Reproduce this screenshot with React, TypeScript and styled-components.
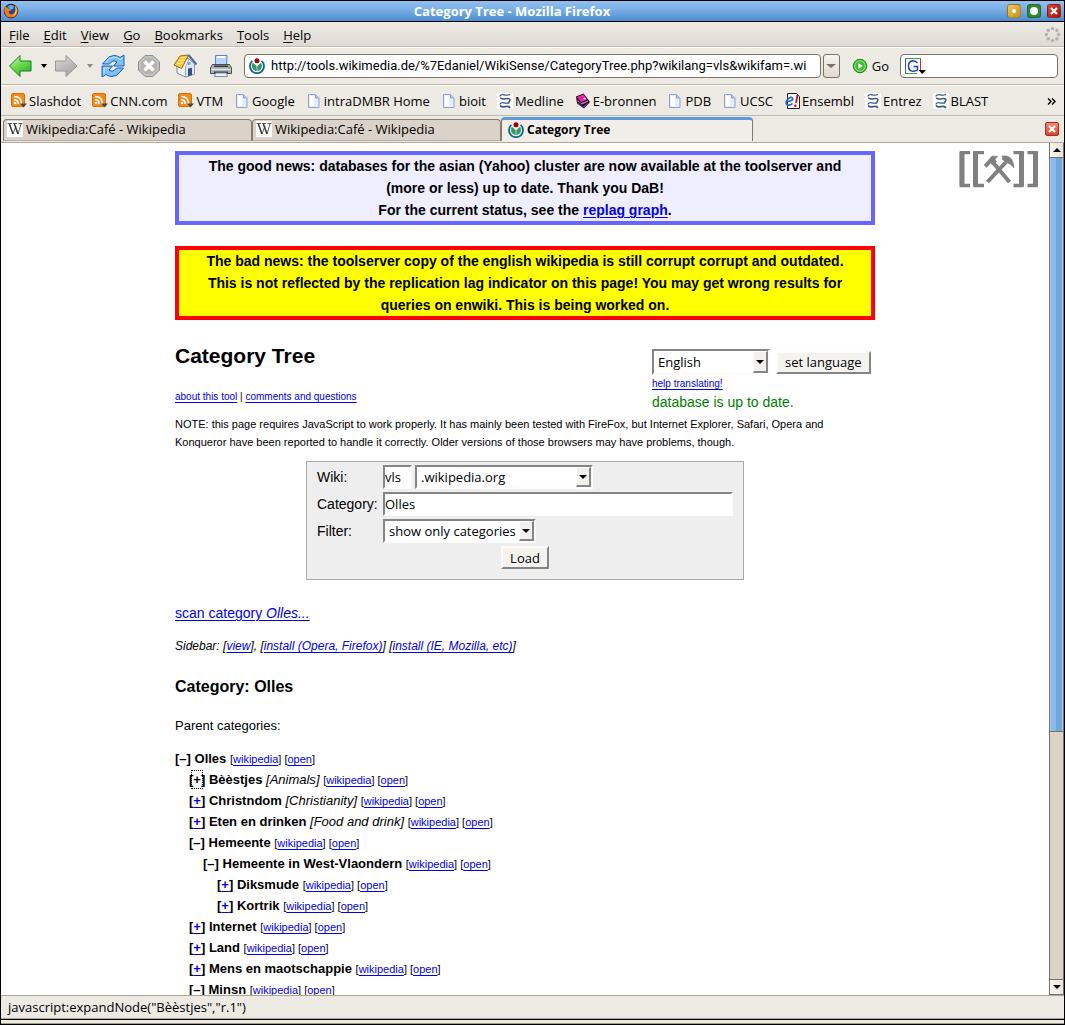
import React from 'react';
import styled, { createGlobalStyle, css } from 'styled-components';

const uiFont = '"Open Sans", "Noto Sans", sans-serif';
const pageFont = '"Liberation Sans", Arial, sans-serif';

const GlobalStyle = createGlobalStyle`
  * { box-sizing: border-box; }
  html, body { margin: 0; padding: 0; }
  body { background: #000; color: #000; }
`;

/* ---------- window frame ---------- */

const Window = styled.div`
  display: flex;
  flex-direction: column;
  height: 100vh;
  padding: 1px;
  background: #000;
  font: 13px/18px ${uiFont};
  overflow: hidden;
`;

const TitleBar = styled.header`
  display: grid;
  grid-template-columns: 20px 1fr 60px;
  align-items: center;
  height: 21px;
  flex: none;
  padding: 0 3px 0 2px;
  border-bottom: 1px solid #000;
  background: linear-gradient(#92c0f0, #78aee6 45%, #4a8dd0);
`;

const WindowTitle = styled.div`
  text-align: center;
  color: #fff;
  font-weight: 700;
  font-size: 13px;
`;

const WindowButtons = styled.div`
  display: flex;
  justify-content: flex-end;
  gap: 6px;
`;

const WindowButton = styled.button<{ $tone: string }>`
  display: grid;
  place-items: center;
  width: 14px;
  height: 14px;
  padding: 0;
  border: 1px solid rgba(60, 30, 0, 0.35);
  border-radius: 3px;
  background: ${(p) => p.$tone};
`;

const MenuBar = styled.nav`
  display: flex;
  align-items: center;
  gap: 14px;
  height: 25px;
  flex: none;
  padding: 1px 3px 0 8px;
  background: linear-gradient(#edeae5, #dfdad3);
  border-bottom: 1px solid #c4b8a4;
`;

const MenuItem = styled.button`
  padding: 0;
  border: 0;
  background: none;
  font: 13px/18px ${uiFont};

  &::first-letter {
    text-decoration: underline;
    text-underline-offset: 2px;
  }
`;

const Spacer = styled.div`
  flex: 1;
`;

const Toolbar = styled.div`
  display: flex;
  align-items: center;
  height: 38px;
  flex: none;
  padding: 0 6px 0 7px;
  background: #edeae4;
  border-top: 1px solid #fff;
  border-bottom: 1px solid #c4b8a4;
`;

const ToolButton = styled.button<{ $gap?: number }>`
  display: flex;
  align-items: center;
  flex: none;
  padding: 0;
  border: 0;
  margin-right: ${(p) => p.$gap ?? 0}px;
  background: none;
  font: 13px/18px ${uiFont};
`;

const fieldFrame = css`
  height: 24px;
  border: 1px solid #7d7265;
  border-radius: 4px;
  background: #fff;
`;

const AddressField = styled.label`
  ${fieldFrame}
  display: flex;
  align-items: center;
  gap: 6px;
  flex: 1;
  min-width: 0;
  padding: 0 6px 0 4px;
`;

const SearchField = styled.label`
  ${fieldFrame}
  display: flex;
  align-items: center;
  width: 158px;
  flex: none;
  padding: 0 4px;
`;

const BareInput = styled.input`
  flex: 1;
  min-width: 0;
  padding: 0;
  border: 0;
  outline: 0;
  background: none;
  font: 13px/18px ${uiFont};
`;

const AddressInput = styled(BareInput)`
  font-family: Roboto, ${uiFont};
`;

const HistoryButton = styled.button`
  display: grid;
  place-items: center;
  width: 17px;
  height: 24px;
  flex: none;
  margin: 0 12px 0 2px;
  padding: 0;
  border: 1px solid #7d7265;
  border-radius: 3px;
  background: linear-gradient(#f7f5f2, #dfd9d1);
`;

const GoLabel = styled.span`
  margin: 0 11px 0 4px;
`;

const BookmarkBar = styled.nav`
  display: flex;
  align-items: center;
  justify-content: space-between;
  height: 31px;
  flex: none;
  padding: 0 8px 0 10px;
  background: #edeae4;
  border-top: 1px solid #fff;
  border-bottom: 1px solid #bcb8b2;
  white-space: nowrap;
`;

const BookmarkList = styled.div`
  display: flex;
  gap: 11px;
`;

const Bookmark = styled.a`
  display: flex;
  align-items: center;
  gap: 2px;
  color: #000;
  text-decoration: none;

  svg { flex: none; }
`;

const MoreButton = styled.button`
  padding: 0;
  border: 0;
  background: none;
`;

const TabStrip = styled.div`
  display: flex;
  align-items: flex-end;
  height: 27px;
  flex: none;
  padding: 0 5px 1px 2px;
  background: #edeae4;
  border-bottom: 1px solid #b5a898;
`;

const Tab = styled.button<{ $active?: boolean }>`
  display: flex;
  align-items: center;
  gap: 3px;
  flex: 0 1 ${(p) => (p.$active ? 252 : 249)}px;
  min-width: 0;
  height: ${(p) => (p.$active ? 24 : 22)}px;
  padding: 0 3px 2px ${(p) => (p.$active ? 6 : 3)}px;
  border: 1px solid #85796b;
  border-bottom: ${(p) => (p.$active ? '0' : '1px solid #b5ada0')};
  border-top: ${(p) => (p.$active ? '3px solid #5c9ad8' : '1px solid #85796b')};
  border-radius: 4px 4px 0 0;
  background: ${(p) => (p.$active ? '#f1eeea' : '#dbd3c9')};
  font: ${(p) => (p.$active ? 700 : 400)} ${(p) => (p.$active ? 12 : 13)}px/18px ${uiFont};
  white-space: nowrap;
`;

const CloseTab = styled.button`
  display: grid;
  place-items: center;
  align-self: center;
  width: 14px;
  height: 14px;
  padding: 0;
  border: 1px solid #b22a1c;
  border-radius: 2px;
  background: linear-gradient(#f08a74, #d8452e);
`;

const Viewport = styled.div`
  display: flex;
  flex: 1;
  min-height: 0;
  background: #fff;
`;

const StatusBar = styled.footer`
  height: 24px;
  flex: none;
  padding: 2px 7px;
  border-top: 1px solid #aca58f;
  border-bottom: 1px solid #aca58f;
  background: #edeae4;
`;

const FrameEdge = styled.div`
  height: 4px;
  flex: none;
  margin-top: 1px;
  border-bottom: 1px solid #a49a80;
  background: #edeae4;
`;

/* ---------- scroll bar ---------- */

const ScrollTrack = styled.div`
  display: flex;
  flex-direction: column;
  width: 15px;
  flex: none;
  border: 1px solid #80705f;
  border-top: 0;
  background: #dbd3c8;
`;

const ScrollArrow = styled.button`
  display: grid;
  place-items: center;
  height: 14px;
  flex: none;
  padding: 0;
  border: 0;
  background: linear-gradient(90deg, #f8f6f3, #e9e4de);
`;

const ScrollThumb = styled.div`
  flex: 575 0 0;
  border: 1px solid #80705f;
  border-width: 1px 0;
  background: linear-gradient(90deg, #a5cdf4 10%, #8bbbe9 10%, #8bbbe9 45%, #70a8dc 45%, #70a8dc 90%, #a5cdf4 90%);
`;

const ScrollRest = styled.div`
  flex: 248 0 0;
  border-bottom: 1px solid #80705f;
`;

/* ---------- page ---------- */

const Page = styled.main`
  display: grid;
  grid-template-columns: minmax(0, 1fr) minmax(0, 700px) minmax(0, 1fr);
  flex: 1;
  min-width: 0;
  padding-top: 8px;
  overflow: hidden;
  font-family: ${pageFont};
`;

const Column = styled.div`
  grid-column: 2;
`;

const LogoLink = styled.a`
  justify-self: end;
  margin-right: 10px;
`;

const Banner = styled.section<{ $edge: string; $fill: string }>`
  margin-bottom: 21px;
  padding: 0 14px;
  border: 4px solid ${(p) => p.$edge};
  background: ${(p) => p.$fill};
  font-size: 14px;
  font-weight: 700;
  line-height: 22px;
  text-align: center;
`;

const Link = styled.a`
  color: #00e;
  text-decoration: underline;
  text-underline-offset: 2px;
  text-decoration-thickness: 1px;
`;

const PageHead = styled.div`
  display: grid;
  grid-template-columns: 1fr 223px;
  padding: 1px 0 4px;
`;

const Title = styled.h1`
  margin: 0 0 18px;
  font-size: 21px;
  line-height: 28px;
`;

const SmallLine = styled.div`
  font-size: 10px;
  line-height: 18px;
`;

const LanguageForm = styled.form`
  padding-top: 7px;
`;

const LanguageRow = styled.div`
  display: flex;
  align-items: center;
  gap: 6px;
`;

const Freshness = styled.div`
  color: #008000;
  font-size: 14px;
  line-height: 18px;
`;

const Note = styled.p`
  margin: 0;
  font-size: 11px;
  line-height: 18px;
`;

const sunken = css`
  border: 2px solid;
  border-color: #858585 #fcfcfc #fcfcfc #858585;
  background: #fff;
`;

const SelectFrame = styled.span<{ $width: number; $tall?: boolean }>`
  ${sunken}
  display: flex;
  align-items: center;
  width: ${(p) => p.$width}px;
  height: ${(p) => (p.$tall ? 26 : 24)}px;
`;

const SelectBox = styled.select`
  appearance: none;
  flex: 1;
  min-width: 0;
  padding: 0 0 0 4px;
  border: 0;
  background: none;
  font: 13px/18px ${uiFont};
`;

const SelectArrow = styled.span`
  display: grid;
  place-items: center;
  align-self: stretch;
  width: 15px;
  border: solid;
  border-width: 1px 2px 2px 1px;
  border-color: #fff #858585 #858585 #fff;
  background: #f2f0ec;
  pointer-events: none;
`;

const TextBox = styled.input`
  ${sunken}
  width: 100%;
  height: 24px;
  padding: 0;
  font: 13px/18px ${uiFont};
`;

const CodeBox = styled(TextBox)`
  width: 29px;
`;

const PushButton = styled.button`
  height: 23px;
  padding: 0 7px;
  border: 2px solid;
  border-color: #fcfcfc #858585 #858585 #fcfcfc;
  background: #f4f3f0;
  font: 13px/18px ${uiFont};
`;

const QueryForm = styled.form`
  display: grid;
  grid-template-columns: 62px 350px;
  align-items: center;
  gap: 3px 4px;
  width: fit-content;
  margin: 10px auto 22px;
  padding: 3px 10px 10px;
  border: 1px solid #aaa;
  background: #eee;
  font-size: 14px;
`;

const FieldRow = styled.div`
  display: flex;
  gap: 3px;
`;

const SubmitRow = styled.div`
  grid-column: 1 / -1;
  text-align: center;
  line-height: 0;
`;

const ScanLine = styled.p`
  margin: 0 0 11px;
  font-size: 14px;
  line-height: 22px;
`;

const SidebarLine = styled.p`
  margin: 0 0 19px;
  font-size: 12px;
  font-style: italic;
  line-height: 22px;
`;

const Heading = styled.h2`
  margin: 0 0 17px;
  font-size: 16px;
  line-height: 22px;
`;

const Parents = styled.p`
  margin: 0 0 11px;
  font-size: 13px;
  line-height: 22px;
`;

const Branch = styled.ul<{ $root?: boolean }>`
  margin: 0;
  padding: 0 0 0 ${(p) => (p.$root ? 0 : 14)}px;
  list-style: none;
`;

const NodeLine = styled.div`
  height: 21px;
  font-size: 13px;
  line-height: 21px;
`;

const Toggle = styled(Link)<{ $focused?: boolean }>`
  ${(p) => p.$focused && css`
    color: #000;
    text-decoration: none;
    outline: 1px dotted #000;
    outline-offset: 1px;
  `}
`;

const NodeLinks = styled.span`
  font-size: 11px;
`;

/* ---------- icons ---------- */

const Triangle = ({ color = '#000', w = 7, up }: { color?: string; w?: number; up?: boolean }) => (
  <svg width={w} height={4} viewBox="0 0 8 4" preserveAspectRatio="none" aria-hidden>
    <path d={up ? 'M0 4L4 0L8 4Z' : 'M0 0H8L4 4Z'} fill={color} />
  </svg>
);

const Cross = () => (
  <svg width="8" height="8" viewBox="0 0 8 8" aria-hidden>
    <path d="M1 1L7 7M7 1L1 7" stroke="#fff" strokeWidth="2.2" />
  </svg>
);

const Chevrons = () => (
  <svg width="9" height="7" viewBox="0 0 9 7" aria-hidden>
    <path d="M1 0.500L4 3.500L1 6.500M5 0.500L8 3.500L5 6.500" fill="none" stroke="#000" strokeWidth="1.400" />
  </svg>
);

const FirefoxIcon = () => (
  <svg width="16" height="16" viewBox="0 0 16 16" aria-hidden>
    <circle cx="8" cy="8" r="6.8" fill="#24468e" stroke="#4a1508" />
    <path d="M5 3Q8 1 11 3L10 6L7 7Z" fill="#55b5e8" />
    <path d="M2 3Q1 6 1.4 9Q3 14.6 8 14.6Q14.8 14 14.6 7Q14 4 12 2.6Q13.6 6 12 9Q10 12 7 11Q5 10 6 8L8 7.4L6 6L5 4.4Q3 5 2 3Z" fill="#ee7a1a" />
    <path d="M12 3Q14.6 6 13.4 10Q12 13 9 13.4Q12.6 10.6 12.6 7Z" fill="#ffd34d" />
  </svg>
);

const Throbber = () => (
  <svg width="17" height="17" viewBox="0 0 17 17" aria-hidden>
    {[0, 45, 90, 135, 180, 225, 270, 315].map((a) => (
      <circle key={a} cx="8.5" cy="2.4" r="1.7" fill="#b5b1ac" transform={`rotate(${a} 8.5 8.5)`} />
    ))}
  </svg>
);

const ArrowIcon = ({ forward }: { forward?: boolean }) => (
  <svg width="24" height="24" viewBox="0 0 24 24" aria-hidden>
    <defs>
      <linearGradient id="backFill" x1="0" y1="0" x2="0.6" y2="1">
        <stop offset="0" stopColor="#d3f5b4" />
        <stop offset="0.55" stopColor="#6bdc4c" />
        <stop offset="1" stopColor="#2fb32c" />
      </linearGradient>
      <linearGradient id="forwardFill" x1="0" y1="0" x2="0.6" y2="1">
        <stop offset="0" stopColor="#dddcda" />
        <stop offset="1" stopColor="#a6a5a4" />
      </linearGradient>
    </defs>
    {forward ? (
      <path d="M23 12L12 1.5V7H1.5V17H12V22.500Z" fill="url(#forwardFill)" stroke="#9a9896" />
    ) : (
      <path d="M1.500 12L12 1.5V7H23V17H12V22.500Z" fill="url(#backFill)" stroke="#1d7f1f" />
    )}
  </svg>
);

const ReloadIcon = () => (
  <svg width="24" height="24" viewBox="0 0 24 24" aria-hidden>
    <g fill="#7cc0f8" stroke="#1b5fb8" strokeLinejoin="round">
      <path d="M1.500 10L5 6Q7 2 13 1.500Q16.500 1.500 19 3.500L23 1V12H12.500L16 8Q12 5 8.500 10Z" />
      <path d="M22.500 14L19 18Q17 22 11 22.500Q7.500 22.500 5 20.500L1 23V12H11.500L8 16Q12 19 15.500 14Z" />
    </g>
    <path d="M4.500 8.500Q8 3 13 3Q17 3.500 19 5.500L21.500 4" fill="none" stroke="#c5e6ff" />
    <path d="M3 19.500V14H8" fill="none" stroke="#c5e6ff" />
  </svg>
);

const StopIcon = () => (
  <svg width="24" height="24" viewBox="0 0 24 24" aria-hidden>
    <path d="M8 1.500H16L22.500 8V16L16 22.500H8L1.500 16V8Z" fill="#b4b3b2" stroke="#8f8e8d" />
    <path d="M8.400 3H15.600L21 8.400V15.600L15.600 21H8.400L3 15.600V8.400Z" fill="none" stroke="#d3d2d1" />
    <path d="M7.500 7.500L16.500 16.500M16.500 7.500L7.500 16.500" stroke="#fff" strokeWidth="3.600" />
  </svg>
);

const HomeIcon = () => (
  <svg width="24" height="24" viewBox="0 0 24 24" aria-hidden>
    <path d="M4 11V19L12.500 23L21.500 20V10L15 4Z" fill="#f4f6fb" stroke="#7d8ba8" />
    <path d="M12.500 13V23L21.500 20V10L16 5Z" fill="#dfe6f3" stroke="#7d8ba8" strokeWidth="0.7" />
    <path d="M15 14.500L19 13.700V21L15 22.300Z" fill="#3a4f79" />
    <path d="M15 8.500L17.500 8V10.500L15 11Z" fill="#6d9bdc" />
    <path d="M7 2L15.500 1L10.500 11L8.500 14.500L1 11Z" fill="#f8c93c" stroke="#9c6a0c" strokeLinejoin="round" />
    <path d="M8 3.500L13.500 3M5.500 6.500L12 6M4 9.500L10 9" stroke="#fde99a" />
    <path d="M15.500 1L23.500 10.500" stroke="#4d699b" strokeWidth="2" />
  </svg>
);

const PrintIcon = () => (
  <svg width="24" height="24" viewBox="0 0 24 24" aria-hidden>
    <path d="M6.500 1.500H18L17.500 11H6.500Z" fill="#b9d4fa" stroke="#5f83c6" />
    <path d="M8 3H16.500" stroke="#fff" strokeWidth="2" />
    <path d="M3.500 10.500H20.500L22.500 14V19.500H1.500V14Z" fill="#b1b2b6" stroke="#4b4d55" strokeLinejoin="round" />
    <path d="M5 11.500H19V13H5Z" fill="#33353c" />
    <path d="M2 15.500H22" stroke="#e9e9ec" />
    <path d="M5 17.500H19V20H5Z" fill="#3c3e46" />
    <path d="M6.500 19H17.500L18.500 22.500H5.500Z" fill="#eef4fe" stroke="#7d8ba8" />
    <path d="M19 14H21" stroke="#53c03c" strokeWidth="1.500" />
  </svg>
);

const WikimediaIcon = () => (
  <svg width="16" height="16" viewBox="0 0 16 16" aria-hidden>
    <circle cx="8" cy="2.800" r="2.500" fill="#a00000" />
    <path d="M3.400 2.900A7 7 0 1 0 12.600 2.900" fill="none" stroke="#0f6797" strokeWidth="1.800" />
    <path d="M4 4.800A5.200 5.200 0 0 0 7.700 13.200V8.300Z" fill="#339966" />
    <path d="M12 4.800A5.200 5.200 0 0 1 8.300 13.200V8.300Z" fill="#339966" />
  </svg>
);

const GoIcon = () => (
  <svg width="16" height="16" viewBox="0 0 16 16" aria-hidden>
    <circle cx="8" cy="8" r="6.700" fill="#43c332" stroke="#177a18" />
    <circle cx="8" cy="8" r="5.300" fill="none" stroke="#96e680" />
    <path d="M6 4.500L11.500 8L6 11.500Z" fill="#fff" stroke="#177a18" strokeWidth="0.500" />
  </svg>
);

const SearchEngineIcon = () => (
  <svg width="22" height="17" viewBox="0 0 22 17" aria-hidden>
    <path d="M0.500 16V0.500H16" fill="#fff" stroke="#2b5fe0" />
    <path d="M1 0.500H16" stroke="#3aa33a" />
    <path d="M15.500 1V12" stroke="#d22" />
    <path d="M1 15.500H12" stroke="#3aa33a" />
    <path d="M12.500 5.200Q11 2.700 8 2.700Q3.500 3 3.500 8Q3.500 13 8 13.300Q11 13.300 12.500 12V8.500H8.500" fill="none" stroke="#1a3fc0" strokeWidth="1.500" />
    <path d="M13.500 12H21L17.200 16Z" fill="#000" />
  </svg>
);

const FeedIcon = () => (
  <svg width="16" height="16" viewBox="0 0 16 16" aria-hidden>
    <rect x="0.500" y="0.500" width="13" height="13" rx="1.500" fill="#f28a1c" stroke="#d9700b" />
    <path d="M3 3.500Q10.500 3.500 10.500 11M3 6.800Q7.200 6.800 7.200 11" fill="none" stroke="#fff" strokeWidth="1.600" />
    <circle cx="4" cy="10" r="1.300" fill="#fff" />
    <path d="M9 10.500H16L12.500 14.500Z" fill="#4a4540" />
  </svg>
);

const FileIcon = () => (
  <svg width="16" height="16" viewBox="0 0 16 16" aria-hidden>
    <path d="M2.500 1.500H9.500L13 5V14.500H2.500Z" fill="#e4eeff" stroke="#8f9fd0" />
    <path d="M4 3H8V13H4Z" fill="#fff" />
    <path d="M9.500 1.500V5H13" fill="#b6cdf5" stroke="#8f9fd0" />
  </svg>
);

const NcbiIcon = () => (
  <svg width="16" height="16" viewBox="0 0 16 16" aria-hidden>
    <rect width="16" height="16" fill="#fff" />
    <g fill="none" stroke="#3c5a7e" strokeLinecap="round">
      <path d="M12.500 1.500Q10.500 2.700 7.500 1.800Q4 1.200 3 3" strokeWidth="1.300" />
      <path d="M3.500 5.200Q5.500 6.400 8.500 5.800Q12 5 13 6.500Q13 8 11.500 9.500" strokeWidth="1.500" />
      <path d="M12 9.800Q9.500 10.600 7 9.800Q4 9.300 3 11" strokeWidth="1.300" />
      <path d="M3.500 13Q5 14.200 8 13.600Q11 13 12.500 14.200" strokeWidth="1.800" />
    </g>
  </svg>
);

const BooksIcon = () => (
  <svg width="16" height="16" viewBox="0 0 16 16" aria-hidden>
    <path d="M1 3.500L8.500 0.500L15 9L9 15.500L2 10.500Z" fill="#111" />
    <path d="M2 4L8.500 1.500L12 6.500L6 9Z" fill="#f01fd6" />
    <path d="M4.500 4.500L6.500 3.700L7.500 5.200L5.500 6Z" fill="#e02020" />
    <path d="M8 5.200L10 4.500L11 6L9 6.800Z" fill="#ffe14a" />
    <path d="M2.500 6.500L6 10.200L13 7.500V8.700L7 11.500L2.500 8Z" fill="#c779d8" />
    <path d="M3 9.500L8 13.500L14 9.500V10.500L9 14.800L3 10.500Z" fill="#8f2fb0" />
  </svg>
);

const EnsemblIcon = () => (
  <svg width="16" height="16" viewBox="0 0 16 16" aria-hidden>
    <path d="M3.500 0.500H12.500L15.500 3.500V15.500H3.500Z" fill="#fff" stroke="#222" />
    <path d="M1.500 8.500Q10 8 8.600 5.200Q7 3.200 4 6Q0.500 10 3.500 12Q6.500 12.800 8.500 10.500" fill="none" stroke="#2563c4" strokeWidth="1.700" />
    <path d="M13.500 2L12 10" stroke="#c1121c" strokeWidth="1.800" />
    <circle cx="11.300" cy="12.800" r="1.300" fill="#c1121c" />
  </svg>
);

const WikipediaIcon = () => (
  <svg width="16" height="16" viewBox="0 0 16 16" aria-hidden>
    <rect width="16" height="16" fill="#fff" />
    <g fill="none" stroke="#333">
      <path d="M0.500 2.500H5M6 2.500H10M11.500 2.500H15.500" strokeWidth="0.800" />
      <path d="M2.400 3L6 13M7.400 3L11 13" strokeWidth="1.500" />
      <path d="M6 13L9 5M11 13L14 3" strokeWidth="0.800" />
    </g>
  </svg>
);

const ToolserverLogo = () => (
  <svg width="80" height="38" viewBox="0 0 80 38" role="img" aria-label="Toolserver">
    <g fill="none" stroke="#808080">
      <path d="M11 1.500H2.500V34.500H11M25 1.500H16V34.500H25M54.500 1.500H63V34.500H54.500M68.500 1.500H77V34.500H68.500" strokeWidth="3.500" />
      <path d="M3 1V35M16.500 1V35M62.500 1V35M76.500 1V35" strokeWidth="5" />
    </g>
    <g stroke="#808080" fill="#808080">
      <path d="M50.500 31L34 11.500" strokeWidth="4" />
      <path d="M28.500 31L47 11" strokeWidth="4" />
      <path d="M25 14L33 5L39 5.500L36 8L37.500 10.500L33.500 14L31.500 12L27.500 16.500Z" strokeWidth="0.500" />
      <path d="M43 5Q50 4 53 9Q55 12 55 17Q51 12 47 11.500L43.500 8.500Z" strokeWidth="0.500" />
    </g>
  </svg>
);

/* ---------- data ---------- */

const menus = ['File', 'Edit', 'View', 'Go', 'Bookmarks', 'Tools', 'Help'];

const bookmarks: [string, React.FC][] = [
  ['Slashdot', FeedIcon],
  ['CNN.com', FeedIcon],
  ['VTM', FeedIcon],
  ['Google', FileIcon],
  ['intraDMBR Home', FileIcon],
  ['bioit', FileIcon],
  ['Medline', NcbiIcon],
  ['E-bronnen', BooksIcon],
  ['PDB', FileIcon],
  ['UCSC', FileIcon],
  ['Ensembl', EnsemblIcon],
  ['Entrez', NcbiIcon],
  ['BLAST', NcbiIcon],
];

type CategoryNode = {
  name: string;
  english?: string;
  open?: boolean;
  focused?: boolean;
  children?: CategoryNode[];
};

const tree: CategoryNode[] = [
  {
    name: 'Olles',
    open: true,
    children: [
      { name: 'Bèèstjes', english: 'Animals', focused: true },
      { name: 'Christndom', english: 'Christianity' },
      { name: 'Eten en drinken', english: 'Food and drink' },
      {
        name: 'Hemeente',
        open: true,
        children: [
          {
            name: 'Hemeente in West-Vlaondern',
            open: true,
            children: [{ name: 'Diksmude' }, { name: 'Kortrik' }],
          },
        ],
      },
      { name: 'Internet' },
      { name: 'Land' },
      { name: 'Mens en maotschappie' },
      { name: 'Minsn', open: true },
    ],
  },
];

const CategoryBranch = ({ nodes, root }: { nodes: CategoryNode[]; root?: boolean }) => (
  <Branch $root={root}>
    {nodes.map((n) => (
      <li key={n.name}>
        <NodeLine>
          <b>
            [{n.open ? '–' : <Toggle href="#" $focused={n.focused}>+</Toggle>}] {n.name}
          </b>{' '}
          {n.english && <><i>[{n.english}]</i>{' '}</>}
          <NodeLinks>
            [<Link href="#">wikipedia</Link>] [<Link href="#">open</Link>]
          </NodeLinks>
        </NodeLine>
        {n.children && <CategoryBranch nodes={n.children} />}
      </li>
    ))}
  </Branch>
);

type DropDownProps = { id: string; label?: string; width: number; tall?: boolean; value: string };

const DropDown = ({ id, label, width, tall, value }: DropDownProps) => (
  <SelectFrame $width={width} $tall={tall}>
    <SelectBox id={id} aria-label={label} defaultValue={value}>
      <option>{value}</option>
    </SelectBox>
    <SelectArrow><Triangle w={8} /></SelectArrow>
  </SelectFrame>
);

export default function App() {
  return (
    <Window>
      <GlobalStyle />
      <TitleBar>
        <FirefoxIcon />
        <WindowTitle>Category Tree - Mozilla Firefox</WindowTitle>
        <WindowButtons>
          <WindowButton $tone="linear-gradient(135deg, #efc765, #c98f1a)" aria-label="Minimize">
            <svg width="4" height="4" viewBox="0 0 4 4"><circle cx="2" cy="2" r="2" fill="#fff" /></svg>
          </WindowButton>
          <WindowButton $tone="#2c8a36" aria-label="Maximize">
            <svg width="8" height="8" viewBox="0 0 8 8"><circle cx="4" cy="4" r="4" fill="#fff" /></svg>
          </WindowButton>
          <WindowButton $tone="linear-gradient(135deg, #dc4a35, #a50f08)" aria-label="Close"><Cross /></WindowButton>
        </WindowButtons>
      </TitleBar>

      <MenuBar aria-label="Menu">
        {menus.map((m) => <MenuItem key={m}>{m}</MenuItem>)}
        <Spacer />
        <Throbber />
      </MenuBar>

      <Toolbar>
        <ToolButton $gap={9} aria-label="Back"><ArrowIcon /></ToolButton>
        <ToolButton $gap={7} aria-label="Back history"><Triangle w={6} /></ToolButton>
        <ToolButton $gap={9} aria-label="Forward"><ArrowIcon forward /></ToolButton>
        <ToolButton $gap={8} aria-label="Forward history"><Triangle w={6} color="#8f8b86" /></ToolButton>
        <ToolButton $gap={12} aria-label="Reload"><ReloadIcon /></ToolButton>
        <ToolButton $gap={12} aria-label="Stop"><StopIcon /></ToolButton>
        <ToolButton $gap={12} aria-label="Home"><HomeIcon /></ToolButton>
        <ToolButton $gap={11} aria-label="Print"><PrintIcon /></ToolButton>
        <AddressField>
          <WikimediaIcon />
          <AddressInput
            aria-label="Address"
            defaultValue="http://tools.wikimedia.de/%7Edaniel/WikiSense/CategoryTree.php?wikilang=vls&wikifam=.wi"
          />
        </AddressField>
        <HistoryButton aria-label="Show history"><Triangle w={10} color="#7d7265" /></HistoryButton>
        <ToolButton><GoIcon /><GoLabel>Go</GoLabel></ToolButton>
        <SearchField>
          <SearchEngineIcon />
          <BareInput aria-label="Search" />
        </SearchField>
      </Toolbar>

      <BookmarkBar aria-label="Bookmarks">
        <BookmarkList>
          {bookmarks.map(([name, Icon]) => (
            <Bookmark key={name} href="#"><Icon />{name}</Bookmark>
          ))}
        </BookmarkList>
        <MoreButton aria-label="More bookmarks"><Chevrons /></MoreButton>
      </BookmarkBar>

      <TabStrip>
        <Tab><WikipediaIcon />Wikipedia:Café - Wikipedia</Tab>
        <Tab><WikipediaIcon />Wikipedia:Café - Wikipedia</Tab>
        <Tab $active><WikimediaIcon />Category Tree</Tab>
        <Spacer />
        <CloseTab aria-label="Close tab"><Cross /></CloseTab>
      </TabStrip>

      <Viewport>
        <Page>
          <Column>
            <Banner $edge="#6666ff" $fill="#eeeeff">
              The good news: databases for the asian (Yahoo) cluster are now available at the toolserver and
              (more or less) up to date. Thank you DaB!<br />
              For the current status, see the <Link href="#">replag graph</Link>.
            </Banner>
            <Banner $edge="#ff0000" $fill="#ffff00">
              The bad news: the toolserver copy of the english wikipedia is still corrupt corrupt and outdated.
              This is not reflected by the replication lag indicator on this page! You may get wrong results for
              queries on enwiki. This is being worked on.
            </Banner>

            <PageHead>
              <div>
                <Title>Category Tree</Title>
                <SmallLine>
                  <Link href="#">about this tool</Link> | <Link href="#">comments and questions</Link>
                </SmallLine>
              </div>
              <LanguageForm onSubmit={(e) => e.preventDefault()}>
                <LanguageRow>
                  <DropDown id="language" label="Language" width={118} tall value="English" />
                  <PushButton>set language</PushButton>
                </LanguageRow>
                <SmallLine><Link href="#">help translating!</Link></SmallLine>
                <Freshness>database is up to date.</Freshness>
              </LanguageForm>
            </PageHead>

            <Note>
              NOTE: this page requires JavaScript to work properly. It has mainly been tested with FireFox, but
              Internet Explorer, Safari, Opera and Konqueror have been reported to handle it correctly. Older
              versions of those browsers may have problems, though.
            </Note>

            <QueryForm onSubmit={(e) => e.preventDefault()}>
              <label htmlFor="wiki">Wiki:</label>
              <FieldRow>
                <CodeBox id="wiki" defaultValue="vls" />
                <DropDown id="family" label="Wiki family" width={178} value=".wikipedia.org" />
              </FieldRow>
              <label htmlFor="category">Category:</label>
              <TextBox id="category" defaultValue="Olles" />
              <label htmlFor="filter">Filter:</label>
              <FieldRow>
                <DropDown id="filter" width={153} value="show only categories" />
              </FieldRow>
              <SubmitRow><PushButton>Load</PushButton></SubmitRow>
            </QueryForm>

            <ScanLine><Link href="#">scan category <i>Olles...</i></Link></ScanLine>
            <SidebarLine>
              Sidebar: [<Link href="#">view</Link>], [<Link href="#">install (Opera, Firefox)</Link>]
              {' '}[<Link href="#">install (IE, Mozilla, etc)</Link>]
            </SidebarLine>
            <Heading>Category: Olles</Heading>
            <Parents>Parent categories:</Parents>
            <CategoryBranch nodes={tree} root />
          </Column>
          <LogoLink href="#" aria-label="Toolserver home"><ToolserverLogo /></LogoLink>
        </Page>
        <ScrollTrack>
          <ScrollArrow aria-label="Scroll up"><Triangle w={8} up /></ScrollArrow>
          <ScrollThumb />
          <ScrollRest />
          <ScrollArrow aria-label="Scroll down"><Triangle w={8} /></ScrollArrow>
        </ScrollTrack>
      </Viewport>

      <StatusBar>javascript:expandNode("Bèèstjes","r.1")</StatusBar>
      <FrameEdge />
    </Window>
  );
}
